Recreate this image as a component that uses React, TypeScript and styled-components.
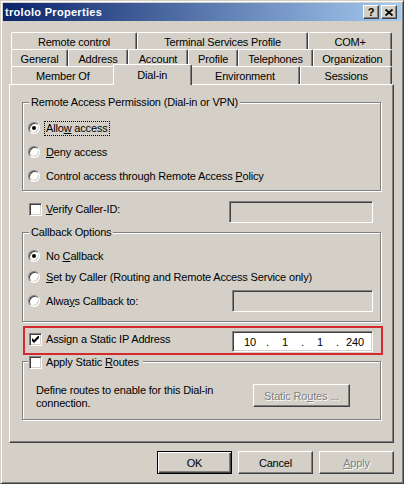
import React from "react";
import styled, { createGlobalStyle, css } from "styled-components";

const Global = createGlobalStyle`
  html, body { margin: 0; padding: 0; background: #D4D0C8; }
  body {
    font-family: "Liberation Sans", Arial, sans-serif;
    font-size: 11px;
    letter-spacing: -0.17px;
    color: #000;
  }
`;

const FACE = "#D4D0C8";

const Window = styled.div`
  box-sizing: border-box;
  width: 404px;
  height: 484px;
  background: ${FACE};
  border: 1px solid;
  border-color: ${FACE} #404040 #404040 ${FACE};
  box-shadow: inset 1px 1px #fff, inset -1px -1px #808080;
  padding: 2px;
  display: flex;
  flex-direction: column;
`;

const TitleBar = styled.div`
  height: 18px;
  flex: none;
  display: flex;
  align-items: center;
  padding: 0 4px 0 2px;
  background: linear-gradient(to right, #0a246a, #a6caf0);
`;

const Title = styled.div`
  flex: 1;
  color: #fff;
  font-weight: bold;
  font-size: 11px;
  letter-spacing: 0.3px;
  white-space: nowrap;
`;

const CaptionButtons = styled.div`
  display: flex;
  gap: 2px;
`;

const CaptionButton = styled.div`
  box-sizing: border-box;
  width: 16px;
  height: 14px;
  background: ${FACE};
  border: 1px solid;
  border-color: #fff #404040 #404040 #fff;
  box-shadow: inset -1px -1px #808080;
  display: flex;
  align-items: center;
  justify-content: center;
  font-weight: bold;
  font-size: 11px;
  line-height: 11px;
  letter-spacing: 0;
  color: #000;
`;

const Body = styled.div`
  display: flex;
  flex-direction: column;
  padding: 11px 7px 0 6px;
`;

const TabStrip = styled.div`
  display: flex;
  flex-direction: column;
  padding: 0 2px;
`;

const TabRow = styled.div<{ $h: number }>`
  display: flex;
  height: ${(p) => p.$h}px;
`;

const Tab = styled.div<{ $w: number; $active?: boolean }>`
  flex: ${(p) => p.$w} 1 0px;
  box-sizing: border-box;
  display: flex;
  align-items: center;
  justify-content: center;
  padding-top: 1px;
  background: ${FACE};
  border-top: 1px solid #fff;
  border-left: 1px solid #fff;
  border-right: 1px solid #404040;
  border-top-left-radius: 2px;
  border-top-right-radius: 2px;
  box-shadow: inset -1px 0 #808080;
  white-space: nowrap;
  ${(p) =>
    p.$active &&
    css`
      margin: -2px -2px -1px;
      padding-top: 0;
      padding-bottom: 1px;
      position: relative;
      z-index: 1;
    `}
`;

const Panel = styled.div`
  box-sizing: border-box;
  height: 359px;
  border: 1px solid;
  border-color: #fff #404040 #404040 #fff;
  box-shadow: inset -1px -1px #808080;
  padding: 0 12px;
  display: flex;
  flex-direction: column;
`;

const GroupBox = styled.div<{ $mt: number }>`
  display: flex;
  flex-direction: column;
  margin-top: ${(p) => p.$mt}px;
  border: 1px solid #808080;
  box-shadow: 1px 1px 0 #fff, inset 1px 1px 0 #fff;
`;

const Legend = styled.div<{ $check?: boolean }>`
  align-self: flex-start;
  display: flex;
  align-items: center;
  gap: 2px;
  background: ${FACE};
  line-height: 13px;
  margin: -7px 0 0 6px;
  padding: 0 2px;
  white-space: nowrap;
  ${(p) =>
    p.$check &&
    css`
      margin-left: 5px;
      padding: 0 2px 0 1px;
    `}
`;

const GroupBody = styled.div<{ $pt: number; $pb: number; $gap: number }>`
  display: flex;
  flex-direction: column;
  gap: ${(p) => p.$gap}px;
  padding: ${(p) => p.$pt}px 7px ${(p) => p.$pb}px 5px;
`;

const OptionRow = styled.div<{ $h?: number }>`
  display: flex;
  align-items: center;
  justify-content: space-between;
  height: ${(p) => p.$h ?? 16}px;
`;

const Choice = styled.div<{ $gap?: number }>`
  display: flex;
  align-items: center;
  gap: ${(p) => p.$gap ?? 4}px;
  height: 16px;
  white-space: nowrap;
`;

const RadioCircle = styled.span`
  box-sizing: border-box;
  width: 12px;
  height: 12px;
  flex: none;
  border-radius: 50%;
  border: 1px solid;
  border-color: #808080 #fff #fff #808080;
  box-shadow: inset 1px 1px #404040, inset -1px -1px ${FACE};
  background: #fff;
  display: flex;
  align-items: center;
  justify-content: center;
`;

const RadioDot = styled.span`
  width: 4px;
  height: 4px;
  border-radius: 50%;
  background: #000;
`;

const CheckSquare = styled.span`
  box-sizing: border-box;
  width: 13px;
  height: 13px;
  flex: none;
  border: 1px solid;
  border-color: #808080 #fff #fff #808080;
  box-shadow: inset 1px 1px #404040, inset -1px -1px ${FACE};
  background: #fff;
  display: flex;
  align-items: center;
  justify-content: center;
`;

const Label = styled.span<{ $focus?: boolean }>`
  line-height: 13px;
  padding: 0 1px;
  border: 1px dotted ${(p) => (p.$focus ? "#000" : "transparent")};
`;

const Key = styled.u`
  text-decoration: underline;
  text-underline-offset: 1px;
`;

const Edit = styled.div<{ $w: number; $h: number; $off?: boolean }>`
  box-sizing: border-box;
  width: ${(p) => p.$w}px;
  height: ${(p) => p.$h}px;
  flex: none;
  border: 1px solid;
  border-color: #808080 #fff #fff #808080;
  box-shadow: inset 1px 1px #404040, inset -1px -1px ${FACE};
  background: ${(p) => (p.$off ? FACE : "#fff")};
`;

const IpEdit = styled(Edit)`
  display: grid;
  grid-template-columns: 1fr 3px 1fr 3px 1fr 3px 1fr;
  align-items: center;
  text-align: center;
  padding: 0 1px;
`;

const FieldRow = styled.div<{ $mt: number }>`
  display: flex;
  justify-content: space-between;
  align-items: flex-start;
  margin-top: ${(p) => p.$mt}px;
  padding: 0 8px 0 7px;
`;

const HighlightRow = styled.div`
  display: flex;
  justify-content: space-between;
  align-items: flex-start;
  margin: 4px -2px 0 1px;
  border: 2px solid #d42a2e;
  padding: 3px 8px 1px 4px;
`;

const RouteBody = styled.div`
  display: flex;
  justify-content: space-between;
  align-items: flex-start;
  padding: 14px 30px 9px 13px;
`;

const Note = styled.div`
  line-height: 13px;
`;

const ButtonRow = styled.div`
  display: flex;
  justify-content: flex-end;
  gap: 6px;
  margin-top: 8px;
`;

const Button = styled.div<{ $w: number; $default?: boolean; $disabled?: boolean }>`
  box-sizing: border-box;
  width: ${(p) => p.$w}px;
  height: 23px;
  flex: none;
  display: flex;
  align-items: center;
  justify-content: center;
  background: ${FACE};
  border: 1px solid;
  border-color: #fff #404040 #404040 #fff;
  box-shadow: inset -1px -1px #808080;
  white-space: nowrap;
  ${(p) =>
    p.$default &&
    css`
      border-color: #000;
      box-shadow: inset 1px 1px #fff, inset -1px -1px #404040, inset -2px -2px #808080;
    `}
  ${(p) =>
    p.$disabled &&
    css`
      color: #808080;
      text-shadow: 1px 1px 0 #fff;
    `}
`;

const Radio = ({ checked }: { checked?: boolean }) => (
  <RadioCircle>{checked && <RadioDot />}</RadioCircle>
);

const Checkbox = ({ checked }: { checked?: boolean }) => (
  <CheckSquare>
    {checked && (
      <svg width="7" height="7" viewBox="0 0 7 7">
        <path d="M0 2 L2 4 L7 -1 L7 2 L2 7 L0 5 Z" fill="#000" />
      </svg>
    )}
  </CheckSquare>
);

const CloseGlyph = () => (
  <svg width="8" height="7" viewBox="0 0 8 7">
    <path d="M0.5 0.5 L7.5 6.5 M7.5 0.5 L0.5 6.5" stroke="#000" strokeWidth="1.8" />
  </svg>
);

export default function App() {
  return (
    <>
      <Global />
      <Window>
        <TitleBar>
          <Title>trololo Properties</Title>
          <CaptionButtons>
            <CaptionButton>?</CaptionButton>
            <CaptionButton>
              <CloseGlyph />
            </CaptionButton>
          </CaptionButtons>
        </TitleBar>
        <Body>
          <TabStrip>
            <TabRow $h={17}>
              <Tab $w={126}>Remote control</Tab>
              <Tab $w={172}>Terminal Services Profile</Tab>
              <Tab $w={83}>COM+</Tab>
            </TabRow>
            <TabRow $h={17}>
              <Tab $w={57}>General</Tab>
              <Tab $w={60}>Address</Tab>
              <Tab $w={60}>Account</Tab>
              <Tab $w={50}>Profile</Tab>
              <Tab $w={75}>Telephones</Tab>
              <Tab $w={80}>Organization</Tab>
            </TabRow>
            <TabRow $h={18}>
              <Tab $w={103}>Member Of</Tab>
              <Tab $w={78} $active>
                Dial-in
              </Tab>
              <Tab $w={110}>Environment</Tab>
              <Tab $w={91}>Sessions</Tab>
            </TabRow>
          </TabStrip>
          <Panel>
            <GroupBox $mt={17}>
              <Legend>Remote Access Permission (Dial-in or VPN)</Legend>
              <GroupBody $pt={11} $pb={6} $gap={8}>
                <OptionRow>
                  <Choice>
                    <Radio checked />
                    <Label $focus>
                      Allo<Key>w</Key> access
                    </Label>
                  </Choice>
                </OptionRow>
                <OptionRow>
                  <Choice>
                    <Radio />
                    <Label>
                      <Key>D</Key>eny access
                    </Label>
                  </Choice>
                </OptionRow>
                <OptionRow>
                  <Choice>
                    <Radio />
                    <Label>
                      Control access through Remote Access <Key>P</Key>olicy
                    </Label>
                  </Choice>
                </OptionRow>
              </GroupBody>
            </GroupBox>

            <FieldRow $mt={10}>
              <Choice $gap={2}>
                <Checkbox />
                <Label>
                  <Key>V</Key>erify Caller-ID:
                </Label>
              </Choice>
              <Edit $w={144} $h={22} $off />
            </FieldRow>

            <GroupBox $mt={9}>
              <Legend>Callback Options</Legend>
              <GroupBody $pt={9} $pb={9} $gap={5}>
                <OptionRow>
                  <Choice>
                    <Radio checked />
                    <Label>
                      No <Key>C</Key>allback
                    </Label>
                  </Choice>
                </OptionRow>
                <OptionRow>
                  <Choice>
                    <Radio />
                    <Label>
                      <Key>S</Key>et by Caller (Routing and Remote Access Service only)
                    </Label>
                  </Choice>
                </OptionRow>
                <OptionRow $h={22}>
                  <Choice>
                    <Radio />
                    <Label>
                      Alwa<Key>y</Key>s Callback to:
                    </Label>
                  </Choice>
                  <Edit $w={141} $h={22} $off />
                </OptionRow>
              </GroupBody>
            </GroupBox>

            <HighlightRow>
              <Choice $gap={2}>
                <Checkbox checked />
                <Label>
                  Assi<Key>g</Key>n a Static IP Address
                </Label>
              </Choice>
              <IpEdit $w={141} $h={21}>
                <span>10</span>
                <span>.</span>
                <span>1</span>
                <span>.</span>
                <span>1</span>
                <span>.</span>
                <span>240</span>
              </IpEdit>
            </HighlightRow>

            <GroupBox $mt={6}>
              <Legend $check>
                <Checkbox />
                <Label>
                  Apply Static <Key>R</Key>outes
                </Label>
              </Legend>
              <RouteBody>
                <Note>
                  Define routes to enable for this Dial-in
                  <br />
                  connection.
                </Note>
                <Button $w={97} $disabled>
                  <span>
                    Static Ro<Key>u</Key>tes ...
                  </span>
                </Button>
              </RouteBody>
            </GroupBox>
          </Panel>
          <ButtonRow>
            <Button $w={75} $default>
              OK
            </Button>
            <Button $w={75}>Cancel</Button>
            <Button $w={75} $disabled>
              <span>
                <Key>A</Key>pply
              </span>
            </Button>
          </ButtonRow>
        </Body>
      </Window>
    </>
  );
}
